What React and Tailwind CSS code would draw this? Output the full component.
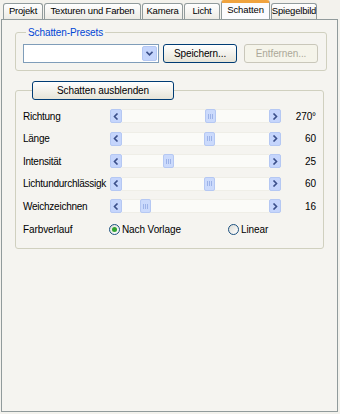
import React from 'react';

const tabs = [
    { label: 'Projekt', w: 'w-[40px]' },
    { label: 'Texturen und Farben', w: 'w-[97px]' },
    { label: 'Kamera', w: 'w-[41px]' },
    { label: 'Licht', w: 'w-[36px]' },
    { label: 'Schatten', w: 'w-[49px]', active: true },
    { label: 'Spiegelbild', w: 'w-[46px]' },
];

const sliders = [
    { label: 'Richtung', value: '270°', pos: 83 },
    { label: 'Länge', value: '60', pos: 82 },
    { label: 'Intensität', value: '25', pos: 41 },
    { label: 'Lichtundurchlässigk', value: '60', pos: 82 },
    { label: 'Weichzeichnen', value: '16', pos: 18 },
];

const ArrowButton = ({ dir }) => (
    <div className="w-[12px] h-[14px] rounded-[2px] border border-[#b5c8f3] bg-[#c5d5fc] flex items-center justify-center">
        <svg width="6" height="7" viewBox="0 0 6 7">
            {dir === 'left' ? (
                <path d="M4.5 0.5 L1.5 3.5 L4.5 6.5" fill="none" stroke="#3b4f8a" strokeWidth="1.6" />
            ) : (
                <path d="M1.5 0.5 L4.5 3.5 L1.5 6.5" fill="none" stroke="#3b4f8a" strokeWidth="1.6" />
            )}
        </svg>
    </div>
);

const Slider = ({ pos }) => (
    <div className="flex items-center">
        <ArrowButton dir="left" />
        <div className="relative w-[147px] h-[14px] bg-[#fbfbf8] border-y border-[#efeee7]">
            <div
                className="absolute top-[-1px] w-[11px] h-[14px] rounded-[2px] border border-[#b5c8f3] bg-[#cbdafc] flex items-center justify-center gap-[1px]"
                style={{ left: pos }}
            >
                <div className="w-px h-[5px] bg-[#9db3e8]" />
                <div className="w-px h-[5px] bg-[#9db3e8]" />
                <div className="w-px h-[5px] bg-[#9db3e8]" />
            </div>
        </div>
        <ArrowButton dir="right" />
    </div>
);

const Radio = ({ checked, label }) => (
    <div className="flex items-center gap-[2px]">
        <div className="w-[11px] h-[11px] rounded-full border border-[#1c5180] bg-gradient-to-br from-[#dcdcd6] to-white flex items-center justify-center">
            {checked && <div className="w-[5px] h-[5px] rounded-full bg-[#2fa32f]" />}
        </div>
        <span>{label}</span>
    </div>
);

const xpButton = 'h-[19px] rounded-[3px] border border-[#003c74] bg-gradient-to-b from-white to-[#e6e4d8] flex items-center justify-center text-black';

export default function App() {
    return (
        <div
            className="w-[340px] h-[414px] bg-[#f3f2ed] flex flex-col text-[10px] text-black tracking-[-0.1px]"
            style={{ fontFamily: '"Liberation Sans", Arial, sans-serif' }}
        >
            {/* tab strip */}
            <div className="flex items-end h-[19px] pl-[3px] relative z-10 text-[9.5px]">
                {tabs.map((t) =>
                    t.active ? (
                        <div
                            key={t.label}
                            className={`${t.w} h-[19px] mr-px bg-[#fcfcfe] border-x border-[#919b9c] border-t-[3px] border-t-[#f0a33e] rounded-t-[3px] flex items-center justify-center pb-[1px] whitespace-nowrap`}
                        >
                            {t.label}
                        </div>
                    ) : (
                        <div
                            key={t.label}
                            className={`${t.w} h-[16px] mr-px bg-gradient-to-b from-white to-[#ecebe5] border border-b-0 border-[#919b9c] rounded-t-[3px] flex items-center justify-center whitespace-nowrap tracking-[-0.2px]`}
                        >
                            {t.label}
                        </div>
                    )
                )}
            </div>

            {/* panel */}
            <div className="flex-1 ml-[1px] mr-[2px] mb-[2px] border border-[#919b9c] bg-[#f5f4f0] px-[13px]">
                <fieldset className="mt-[5px] border border-[#d0d0bf] rounded-[3px] pl-[7px] pr-[8px] pt-[4px] pb-[7px]">
                    <legend className="ml-[3px] px-[2px] text-[#0046d5]">Schatten-Presets</legend>
                    <div className="flex items-center">
                        <div className="w-[136px] h-[19px] border border-[#7f9db9] bg-white flex justify-end p-px">
                            <div className="w-[15px] h-full rounded-[2px] bg-[#c5d5fc] border border-[#b5c8f3] flex items-center justify-center">
                                <svg width="7" height="5" viewBox="0 0 7 5">
                                    <path d="M0.5 0.8 L3.5 3.8 L6.5 0.8" fill="none" stroke="#3b4f8a" strokeWidth="1.6" />
                                </svg>
                            </div>
                        </div>
                        <div className={`${xpButton} w-[74px] ml-[4px]`}>Speichern...</div>
                        <div className="h-[19px] w-[74px] ml-[7px] rounded-[3px] border border-[#c9c7ba] bg-[#f5f4ea] flex items-center justify-center text-[#aca899]">
                            Entfernen...
                        </div>
                    </div>
                </fieldset>

                <fieldset className="mt-[10px] border border-[#d0d0bf] rounded-[3px] pl-[7px] pr-[7px] pt-[5px] pb-[6px]">
                    <legend className="ml-[9px] p-0">
                        <div className={`${xpButton} w-[142px]`}>Schatten ausblenden</div>
                    </legend>
                    {sliders.map((s) => (
                        <div key={s.label} className="flex items-center h-[22.5px]">
                            <div className="w-[87px] whitespace-nowrap tracking-[-0.25px]">{s.label}</div>
                            <Slider pos={s.pos} />
                            <div className="flex-1 text-right">{s.value}</div>
                        </div>
                    ))}
                    <div className="flex items-center h-[24px]">
                        <div className="w-[86px]">Farbverlauf</div>
                        <div className="w-[119px]">
                            <Radio checked label="Nach Vorlage" />
                        </div>
                        <Radio label="Linear" />
                    </div>
                </fieldset>
            </div>
        </div>
    );
}
